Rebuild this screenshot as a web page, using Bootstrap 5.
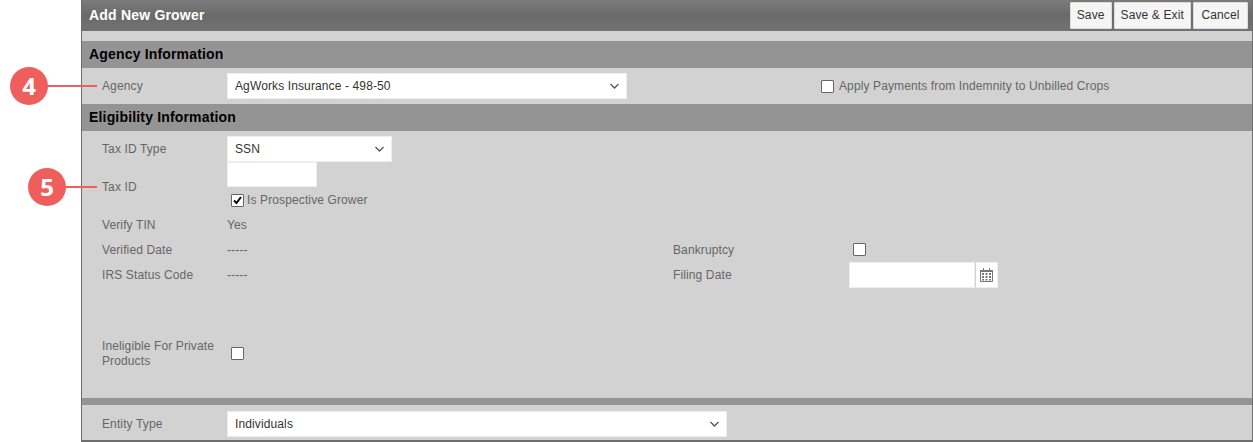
<!DOCTYPE html>
<html lang="en">
<head>
<meta charset="utf-8">
<title>Add New Grower</title>
<link href="https://cdn.jsdelivr.net/npm/bootstrap@5.3.0/dist/css/bootstrap.min.css" rel="stylesheet">
<style>
html,body{height:442px;overflow:hidden;background:#fff}
body{font-family:"Liberation Sans",Arial,sans-serif;font-size:12px;color:#666;position:relative;letter-spacing:.12px}
.sheet{margin-left:81px;height:442px;background:#d2d2d2;border-left:1px solid #6e6e6e;border-right:1px solid #6e6e6e;border-bottom:2px solid #6e6e6e}
.titlebar{height:31px;background:linear-gradient(#7b7b7b,#6a6a6a 50%,#737373);padding:2px 4px 2px 7px}
.titletxt{font-size:14px;font-weight:700;color:#fff;letter-spacing:.2px}
.btn.actbtn{height:27px;padding:0 6px;font-size:12px;line-height:25px;color:#333;background:#f5f5f5;border:1px solid #ddd;border-radius:1px;letter-spacing:.12px}
.btn.actbtn+.btn.actbtn{margin-left:2px}
.btn.actbtn.cancelbtn{padding:0 7.5px}
.sechead{height:27px;background:#949494;padding-left:7px;font-size:14px;font-weight:700;color:#000;line-height:27px;letter-spacing:.17px}
.spacer10{height:10px}
.lab{width:125px;flex:none}
.rowline{padding-left:20px}
.form-select.fld,.form-control.fld{height:26px;padding:0 7px;font-size:12px;line-height:24px;color:#333;border:1px solid #eee;border-radius:0;box-shadow:none;font-family:inherit;letter-spacing:.12px}
.form-select.fld{background-position:right 7px center;background-size:9px 6px;background-image:url("data:image/svg+xml,%3csvg xmlns='http://www.w3.org/2000/svg' viewBox='0 0 9 6'%3e%3cpath fill='none' stroke='%23555' stroke-width='1.300' d='M.5 1l4 4 4-4'/%3e%3c/svg%3e")}
.w400{width:400px}.w165{width:165px}.w90{width:90px}.w500{width:500px}.w126{width:126px}
.agencyrow{height:36px}
.agencycheck{margin-left:194px;gap:5px}
.form-check-input.tick{width:13px;height:13px;margin:0;border:1px solid #666;border-radius:1px;background-color:#fff;box-shadow:none;flex:none}
.form-check-input.tick:checked{background-color:#fff;border-color:#666;background-size:11px 11px;background-image:url("data:image/svg+xml,%3csvg xmlns='http://www.w3.org/2000/svg' viewBox='0 0 11 11'%3e%3cpath fill='none' stroke='%23000' stroke-width='2' d='M2 5.500l2.500 2.500L9 2'/%3e%3c/svg%3e")}
.form-control.tall{height:25px}
.elig{padding-top:5px}
.r31{height:26px}
.r25{height:25px}
.lab-tax{height:45px;padding-top:16px}
.calbtn{width:23px;height:26px;background:#fff;border:1px solid #eee;border-left:1px solid #d2d2d2}
.checkline{height:25px;padding:1px 0 0 4px;gap:3px}
.leftcol{width:571px;flex:none}
.lab2{width:176px;flex:none}
.inel{height:30px;margin-top:52px;line-height:15px}
.inel .lab{width:129px;line-height:15px}
.inel .tick{margin-bottom:2px}
.tail{height:7px;background:#949494;margin-top:29px}
.entity{height:35px;padding-top:3px}
.note{position:absolute;width:38px;height:38px;border-radius:50%;background:#ee5f5b;color:#fff;font-size:24px;font-weight:700;font-family:"Open Sans","Liberation Sans",sans-serif;line-height:38px;text-align:center;letter-spacing:0}
.leader{position:absolute;height:2px;background:#ee5f5b}
.n4{left:10px;top:67px}.l4{left:46px;top:85px;width:51px}
.n5{left:28px;top:168px}.l5{left:64px;top:186px;width:33px}
</style>
</head>
<body>
<div class="sheet">
  <div class="titlebar d-flex align-items-center justify-content-between">
    <span class="titletxt">Add New Grower</span>
    <div class="d-flex">
      <button type="button" class="btn actbtn">Save</button>
      <button type="button" class="btn actbtn">Save &amp; Exit</button>
      <button type="button" class="btn actbtn cancelbtn">Cancel</button>
    </div>
  </div>
  <div class="spacer10"></div>
  <div class="sechead">Agency Information</div>
  <div class="agencyrow rowline d-flex align-items-center">
    <span class="lab">Agency</span>
    <select class="form-select fld w400"><option>AgWorks Insurance - 498-50</option></select>
    <label class="agencycheck d-flex align-items-center">
      <input class="form-check-input tick" type="checkbox"><span>Apply Payments from Indemnity to Unbilled Crops</span>
    </label>
  </div>
  <div class="sechead">Eligibility Information</div>
  <div class="elig rowline">
    <div class="d-flex align-items-center r31">
      <span class="lab">Tax ID Type</span>
      <select class="form-select fld w165"><option>SSN</option></select>
    </div>
    <div class="d-flex">
      <span class="lab lab-tax">Tax ID</span>
      <div>
        <input class="form-control fld tall w90" type="text">
        <label class="d-flex align-items-center checkline">
          <input class="form-check-input tick" type="checkbox" checked><span>Is Prospective Grower</span>
        </label>
      </div>
    </div>
    <div class="d-flex">
      <div class="leftcol">
        <div class="d-flex align-items-center r25"><span class="lab">Verify TIN</span><span>Yes</span></div>
        <div class="d-flex align-items-center r25"><span class="lab">Verified Date</span><span>-----</span></div>
        <div class="d-flex align-items-center r25"><span class="lab">IRS Status Code</span><span>-----</span></div>
      </div>
      <div>
        <div class="r25"></div>
        <div class="d-flex align-items-center r25"><span class="lab2">Bankruptcy</span><span class="ps-1 d-flex"><input class="form-check-input tick" type="checkbox"></span></div>
        <div class="d-flex align-items-center r25"><span class="lab2">Filing Date</span>
          <div class="d-flex">
            <input class="form-control fld w126" type="text">
            <span class="calbtn d-flex align-items-center justify-content-center">
              <svg width="13" height="14" viewBox="0 0 13 14"><path fill="none" stroke="#777" d="M.5 2.500h12v11H.5z"/><path fill="#777" d="M0 2h13v2H0zM3 0h1v2H3zM9 0h1v2H9zM2 5h2v2H2zM5.500 5h2v2h-2zM9 5h2v2H9zM2 8h2v2H2zM5.500 8h2v2h-2zM9 8h2v2H9zM2 11h2v1.500H2zM5.500 11h2v1.500h-2zM9 11h2v1.500H9z"/></svg>
            </span>
          </div>
        </div>
      </div>
    </div>
    <div class="d-flex align-items-center inel">
      <span class="lab">Ineligible For Private Products</span>
      <input class="form-check-input tick" type="checkbox">
    </div>
  </div>
  <div class="tail"></div>
  <div class="entity rowline d-flex align-items-center">
    <span class="lab">Entity Type</span>
    <select class="form-select fld w500"><option>Individuals</option></select>
  </div>
</div>
<div class="leader l4"></div><div class="note n4">4</div>
<div class="leader l5"></div><div class="note n5">5</div>
</body>
</html>
